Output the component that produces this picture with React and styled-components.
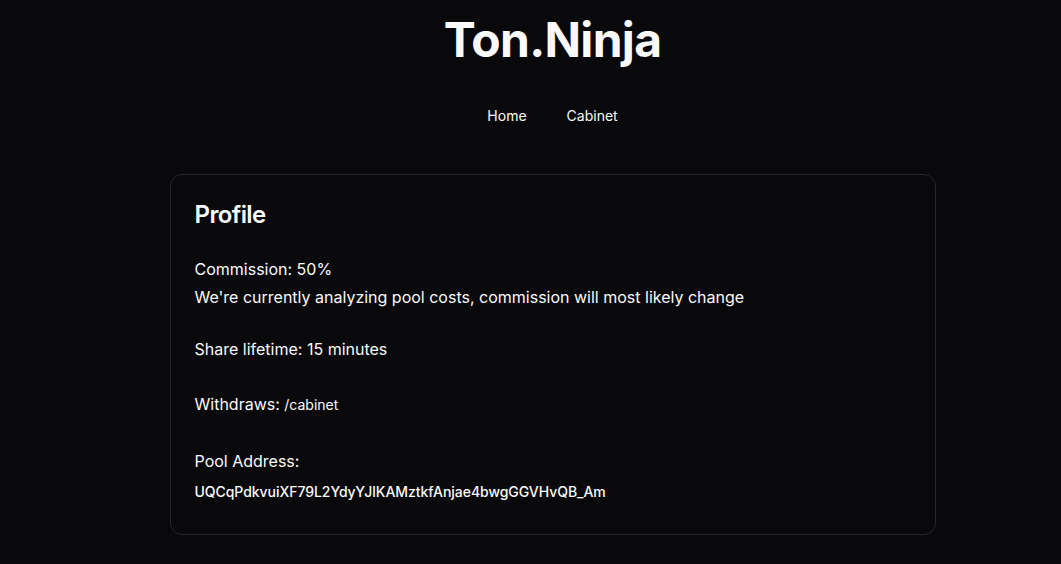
import React from 'react';
import styled, { createGlobalStyle } from 'styled-components';

const GlobalStyle = createGlobalStyle`
  html, body {
    margin: 0;
    background: #09090b;
    color: #fafafa;
    font-family: Inter, "Noto Sans", sans-serif;
  }
`;

const Page = styled.div`
  min-height: 100vh;
  padding-left: 44px;
  display: flex;
  flex-direction: column;
  align-items: center;
`;

const Logo = styled.h1`
  margin: 16px 0 0;
  font-size: 48px;
  line-height: 1;
  font-weight: 700;
  letter-spacing: -0.7px;
`;

const Nav = styled.nav`
  display: flex;
  gap: 40px;
  margin-top: 42px;
`;

const NavLink = styled.a`
  color: #fafafa;
  font-size: 14px;
  font-weight: 400;
  line-height: 20px;
  text-decoration: none;
  cursor: pointer;
`;

const Card = styled.section`
  box-sizing: border-box;
  width: 766px;
  margin-top: 48px;
  padding: 24px 24px 32px;
  border: 1px solid #27272a;
  border-radius: 12px;
  background: #09090b;
`;

const CardTitle = styled.h2`
  margin: 0 0 24px;
  font-size: 24px;
  line-height: 32px;
  font-weight: 600;
  letter-spacing: -0.6px;
`;

const Block = styled.div`
  margin-bottom: ${(p) => p.$gap ?? 24}px;
  font-size: 16px;
  line-height: 28px;
`;

const Small = styled.span`
  font-size: 14px;
`;

const Address = styled.div`
  font-size: 14px;
  font-weight: 500;
  line-height: 20px;
  margin-top: 7px;
  letter-spacing: -0.05px;
`;

export default function App() {
  return (
    <>
      <GlobalStyle />
      <Page>
        <Logo>Ton.Ninja</Logo>
        <Nav>
          <NavLink>Home</NavLink>
          <NavLink>Cabinet</NavLink>
        </Nav>
        <Card>
          <CardTitle>Profile</CardTitle>
          <Block>
            <div>Commission: 50%</div>
            <div>We're currently analyzing pool costs, commission will most likely change</div>
          </Block>
          <Block $gap={27}>Share lifetime: 15 minutes</Block>
          <Block $gap={28}>
            Withdraws: <Small>/cabinet</Small>
          </Block>
          <Block $gap={0}>
            <div>Pool Address:</div>
            <Address>UQCqPdkvuiXF79L2YdyYJlKAMztkfAnjae4bwgGGVHvQB_Am</Address>
          </Block>
        </Card>
      </Page>
    </>
  );
}
